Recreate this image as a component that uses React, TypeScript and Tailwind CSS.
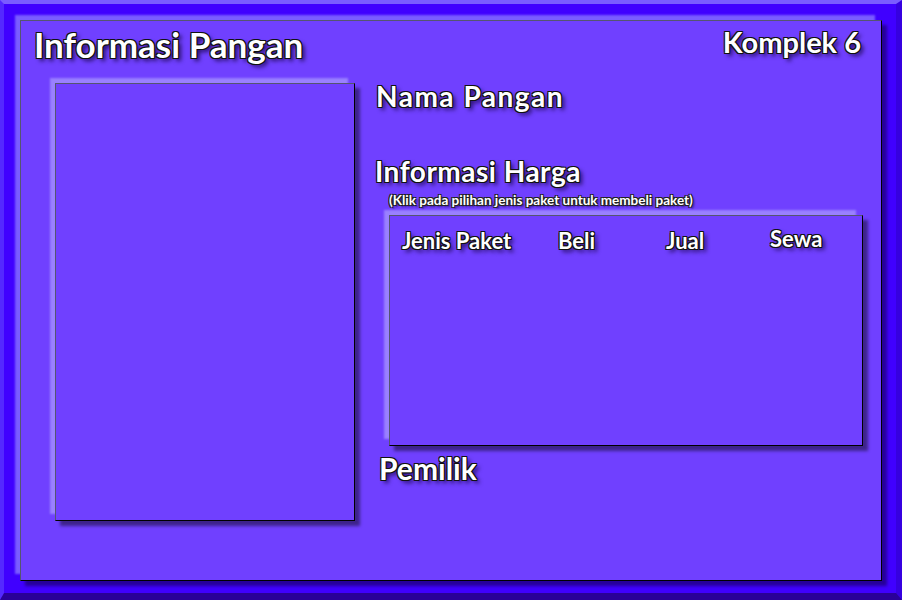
import React from "react";

const txt =
  "text-white [text-shadow:-1px_-1px_0_#111,1px_-1px_0_#111,-1px_1px_0_#111,1px_1px_0_#111,0_1px_0_#111,1px_0_0_#111,3px_3px_4px_rgba(20,0,60,0.8)]";

export default function App() {
  return (
    <div
      className="w-[902px] h-[600px] bg-[#4000ff] border-t-4 border-t-[#7a5cff] border-l-4 border-l-[#5428ff] border-r-[6px] border-r-[#3600e0] border-b-[7px] border-b-[#2a0099] pt-[16px] pl-[16px]"
      style={{ fontFamily: "Lato, 'Open Sans', sans-serif" }}
    >
      <div className="w-[862px] h-[561px] bg-[#7040ff] border border-t-[#555570] border-l-[#555570] border-r-black border-b-black shadow-[-6px_-6px_2px_-1px_#7a5cff,5px_5px_3px_rgba(0,0,0,0.4)] flex flex-col">
        {/* Header */}
        <div className="flex items-start justify-between pt-[6px] pl-[13px] pr-[20px]">
          <div className={`text-[35px] leading-none font-bold ${txt}`}>Informasi Pangan</div>
          <div className={`text-[29px] leading-none font-bold ${txt}`}>Komplek 6</div>
        </div>

        {/* Body */}
        <div className="flex items-start mt-[21px] pl-[34px]">
          <div className="w-[300px] h-[438px] bg-[#7040ff] border border-t-[#555570] border-l-[#555570] border-r-black border-b-black shadow-[-6px_-6px_2px_-1px_#9a80ff,5px_5px_3px_rgba(0,0,0,0.45)]" />

          <div className="ml-[20px] flex flex-col -mt-px">
            <div className={`ml-[1px] text-[28px] leading-none font-bold tracking-[1.5px] ${txt}`}>Nama Pangan</div>
            <div className={`mt-[47px] text-[28px] leading-none font-bold tracking-[0.5px] ${txt}`}>Informasi Harga</div>
            <div className={`mt-[9px] ml-[14px] text-[13.5px] leading-none font-bold ${txt} [text-shadow:-1px_-1px_0_#222,1px_-1px_0_#222,-1px_1px_0_#222,1px_1px_0_#222,2px_2px_2px_rgba(20,0,60,0.6)]`}>
              (Klik pada pilihan jenis paket untuk membeli paket)
            </div>
            <div className="mt-[7px] ml-[14px] w-[474px] h-[231px] bg-[#7040ff] border border-t-[#555570] border-l-[#555570] border-r-black border-b-black shadow-[-6px_-6px_2px_-1px_#9a80ff,5px_5px_3px_rgba(0,0,0,0.45)] pt-[14px] pl-[12px]">
              <div className="grid grid-cols-[156px_108px_104px_1fr] items-start">
                <div className={`text-[22px] leading-none font-bold ${txt}`}>Jenis Paket</div>
                <div className={`text-[22px] leading-none font-bold ${txt}`}>Beli</div>
                <div className={`text-[22px] leading-none font-bold ${txt}`}>Jual</div>
                <div className={`-mt-0.5 text-[22px] leading-none font-bold ${txt}`}>Sewa</div>
              </div>
            </div>
            <div className={`mt-[7px] ml-[4px] text-[30px] leading-none font-bold ${txt}`}>Pemilik</div>
          </div>
        </div>
      </div>
    </div>
  );
}
